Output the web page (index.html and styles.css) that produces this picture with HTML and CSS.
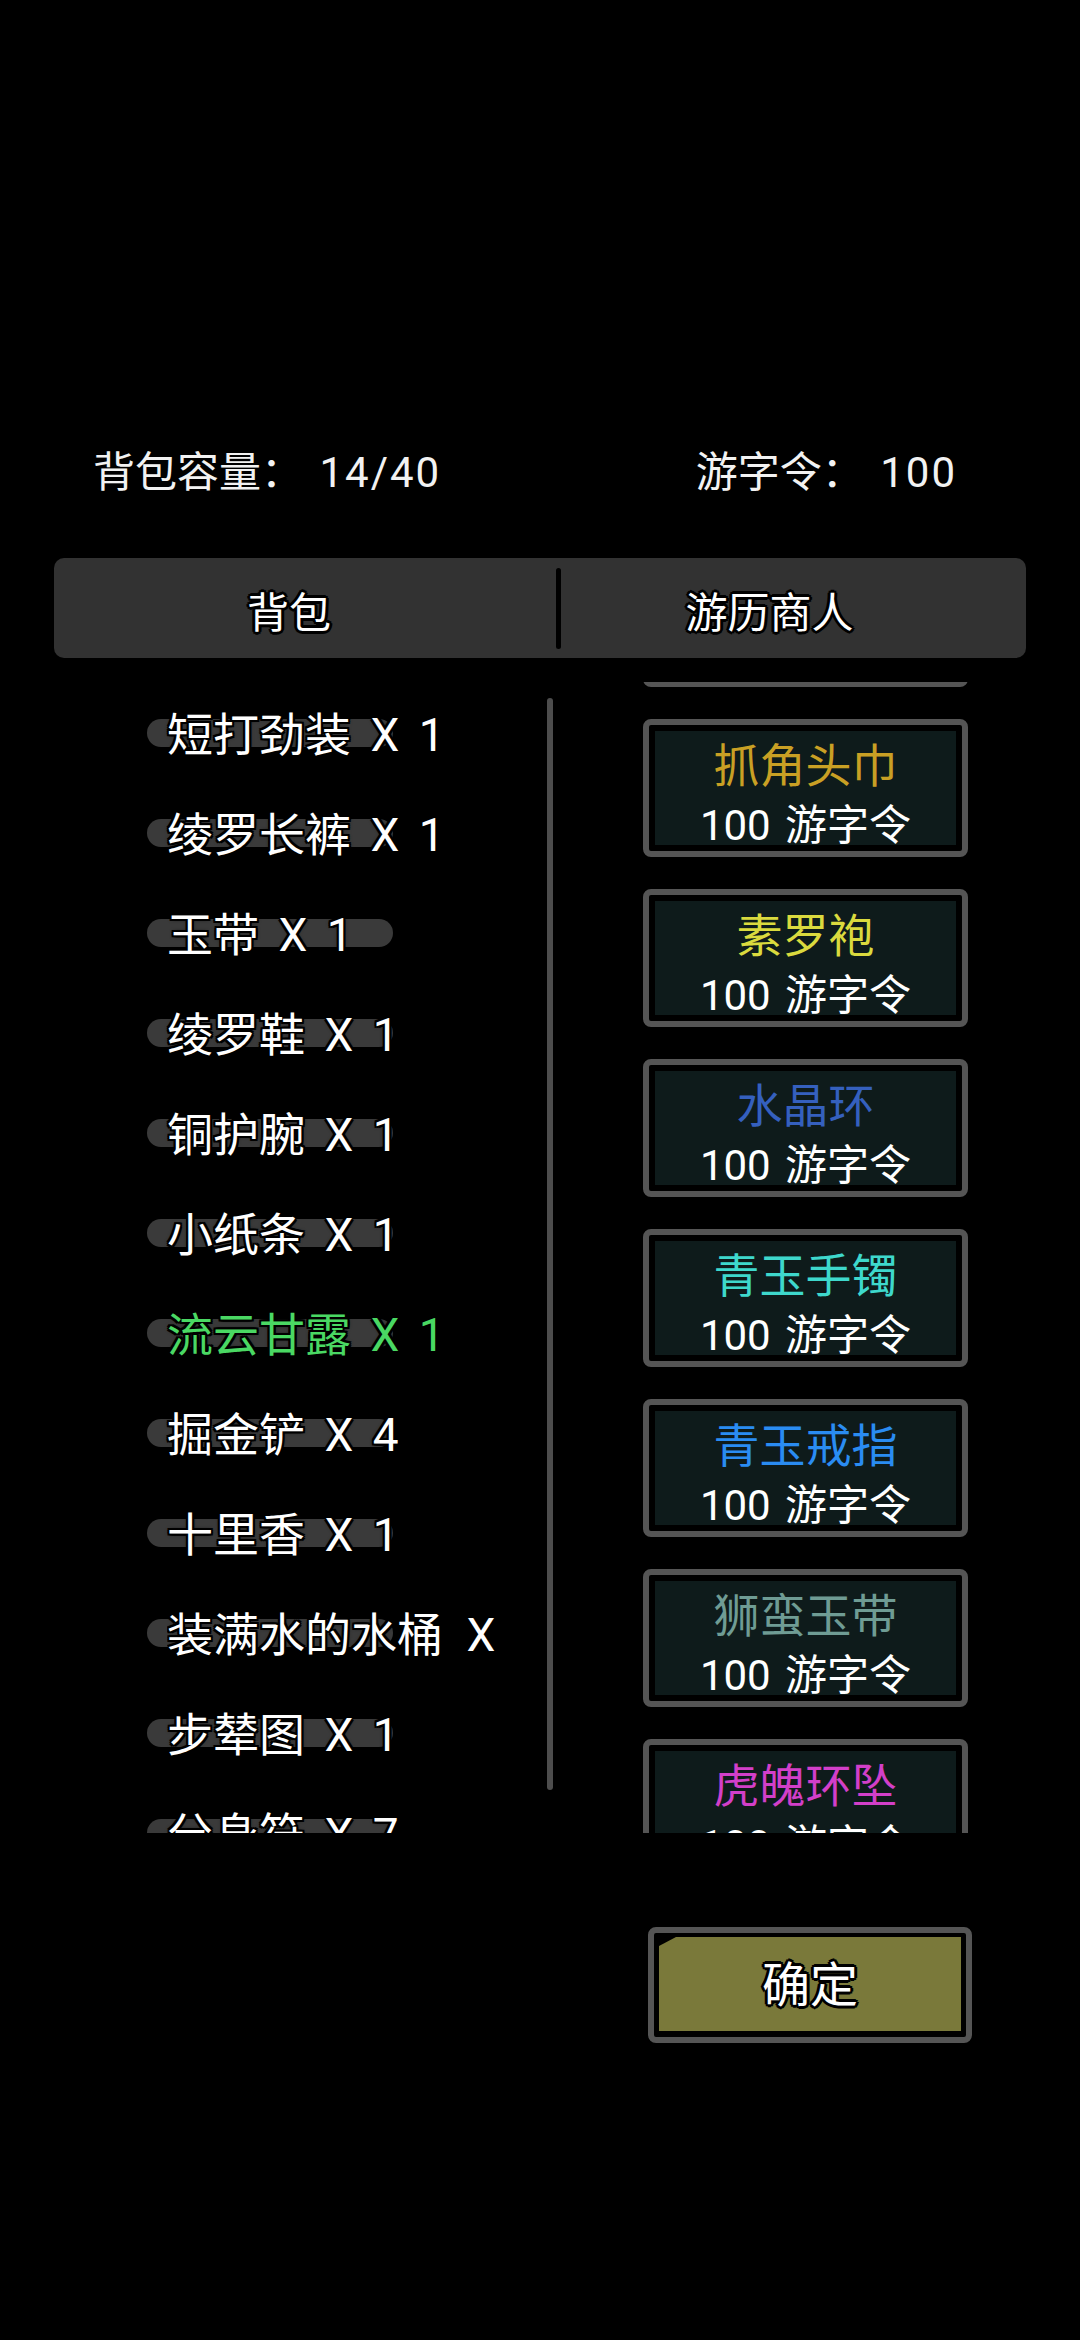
FILE: index.html
```html
<!DOCTYPE html>
<html lang="zh-CN">
<head>
<meta charset="utf-8">
<title>背包</title>
<link rel="stylesheet" href="styles.css">
</head>
<body>
<div class="screen">
  <div class="stats">
    <span class="stat">背包容量： <span class="stat-num">14/40</span></span>
    <span class="stat">游字令： <span class="stat-num">100</span></span>
  </div>

  <div class="tabs">
    <div class="tab tab-bag">背包</div>
    <div class="tab-divider"></div>
    <div class="tab tab-shop">游历商人</div>
  </div>

  <div class="panels">
    <div class="bag">
      <div class="bag-list">
        <div class="bag-item"><span class="item-name">短打劲装 X 1</span></div>
        <div class="bag-item"><span class="item-name">绫罗长裤 X 1</span></div>
        <div class="bag-item"><span class="item-name">玉带 X 1</span></div>
        <div class="bag-item"><span class="item-name">绫罗鞋 X 1</span></div>
        <div class="bag-item"><span class="item-name">铜护腕 X 1</span></div>
        <div class="bag-item"><span class="item-name">小纸条 X 1</span></div>
        <div class="bag-item"><span class="item-name item-green">流云甘露 X 1</span></div>
        <div class="bag-item"><span class="item-name">掘金铲 X 4</span></div>
        <div class="bag-item"><span class="item-name">十里香 X 1</span></div>
        <div class="bag-item"><span class="item-name item-clip">装满水的水桶 X 1</span></div>
        <div class="bag-item"><span class="item-name">步辇图 X 1</span></div>
        <div class="bag-item"><span class="item-name">分身符 X 7</span></div>
      </div>
      <div class="scrollbar"></div>
    </div>

    <div class="shop">
      <div class="shop-list">
        <div class="card"><div class="card-inner"><div class="card-name">&nbsp;</div><div class="card-price">100 游字令</div></div></div>
        <div class="card"><div class="card-inner"><div class="card-name c-gold">抓角头巾</div><div class="card-price">100 游字令</div></div></div>
        <div class="card"><div class="card-inner"><div class="card-name c-yellow">素罗袍</div><div class="card-price">100 游字令</div></div></div>
        <div class="card"><div class="card-inner"><div class="card-name c-navy">水晶环</div><div class="card-price">100 游字令</div></div></div>
        <div class="card"><div class="card-inner"><div class="card-name c-cyan">青玉手镯</div><div class="card-price">100 游字令</div></div></div>
        <div class="card"><div class="card-inner"><div class="card-name c-blue">青玉戒指</div><div class="card-price">100 游字令</div></div></div>
        <div class="card"><div class="card-inner"><div class="card-name c-sage">狮蛮玉带</div><div class="card-price">100 游字令</div></div></div>
        <div class="card"><div class="card-inner"><div class="card-name c-magenta">虎魄环坠</div><div class="card-price">100 游字令</div></div></div>
      </div>
    </div>
  </div>

  <div class="actions">
    <button class="confirm" type="button"><span class="confirm-face"><span class="confirm-label">确定</span></span></button>
  </div>
</div>
</body>
</html>
```

FILE: styles.css
```css
* {
  box-sizing: border-box;
  margin: 0;
  padding: 0;
}

html, body {
  background: #000;
}

body {
  width: 1080px;
  height: 2340px;
  overflow: hidden;
  font-family: Roboto, "Noto Sans CJK SC", "Noto Sans", sans-serif;
  color: #fff;
}

.screen {
  width: 1080px;
  height: 2340px;
}

/* top stats */
.stats {
  display: flex;
  justify-content: space-between;
  padding: 443px 123px 0 93px;
  font-size: 42px;
  line-height: 60px;
  color: #f2f2f2;
}

.stat-num {
  letter-spacing: 2px;
  margin-left: 6px;
}

/* tab bar */
.tabs {
  display: flex;
  align-items: center;
  margin: 55px 54px 0 54px;
  height: 100px;
  background: #323232;
  border-radius: 10px;
}

.tab {
  height: 100px;
  padding-top: 21px;
  line-height: 70px;
  font-size: 42px;
  text-align: center;
  color: #fff;
  text-shadow:
    0 0 3px #000,
    3px 0 0 #000, -3px 0 0 #000, 0 3px 0 #000, 0 -3px 0 #000,
    2px 2px 0 #000, -2px -2px 0 #000, 2px -2px 0 #000, -2px 2px 0 #000;
}

.tab-bag {
  width: 502px;
  padding-right: 32px;
}

.tab-divider {
  width: 5px;
  height: 81px;
  background: #000;
  border-radius: 3px;
}

.tab-shop {
  flex: 1;
  padding-right: 48px;
}

/* panels */
.panels {
  display: flex;
  margin-top: 24px;
  height: 1151px;
  padding-left: 147px;
}

.bag {
  display: flex;
  width: 406px;
  height: 1151px;
}

.bag-list {
  width: 400px;
  height: 1151px;
  overflow: hidden;
  padding-top: 3px;
}

.bag-item {
  position: relative;
  height: 100px;
  display: flex;
  align-items: center;
  padding-left: 20px;
}

.bag-item::before {
  content: "";
  position: absolute;
  left: 0;
  top: 34px;
  width: 246px;
  height: 28px;
  border-radius: 14px;
  background: #3a3a3a;
}

.item-name {
  position: relative;
  display: block;
  white-space: nowrap;
  font-size: 46px;
  line-height: 62px;
  word-spacing: 8px;
  color: #fff;
  text-shadow:
    0 0 4px #000,
    2px 0 0 #000, -2px 0 0 #000, 0 2px 0 #000, 0 -2px 0 #000,
    2px 2px 0 #000, -2px -2px 0 #000, 2px -2px 0 #000, -2px 2px 0 #000;
}

.item-clip {
  white-space: normal;
  width: 356px;
  height: 62px;
  overflow: hidden;
  word-spacing: 12px;
}

.item-green {
  color: #4ad863;
}

.scrollbar {
  width: 6px;
  height: 1092px;
  margin-top: 16px;
  background: #4d4d4d;
  border-radius: 3px;
}

/* shop */
.shop {
  margin-left: 90px;
  width: 325px;
  height: 1151px;
  overflow: hidden;
}

.shop-list {
  margin-top: -133px;
}

.card {
  height: 138px;
  margin-bottom: 32px;
  border: 6px solid #555;
  border-radius: 8px;
  background: #000;
  padding: 6px;
}

.card-inner {
  height: 114px;
  background: #0e1b1b;
  text-align: center;
}

.card-name {
  padding-top: 7px;
  font-size: 46px;
  line-height: 56px;
}

.card-price {
  margin-top: 10px;
  font-size: 42px;
  line-height: 44px;
  word-spacing: 4px;
  color: #fff;
}

.c-gold { color: #c9a024; }
.c-yellow { color: #dada3e; }
.c-navy { color: #3560be; }
.c-cyan { color: #3ed8cc; }
.c-blue { color: #2a8cf2; }
.c-sage { color: #6f9c94; }
.c-magenta { color: #d23fc9; }

/* confirm button */
.actions {
  display: flex;
  justify-content: flex-end;
  padding-right: 108px;
  margin-top: 94px;
}

.confirm {
  display: block;
  width: 324px;
  height: 116px;
  border: 6px solid #555;
  border-radius: 8px;
  background: #000;
  padding: 4px 5px 6px 5px;
  font-family: inherit;
  cursor: pointer;
}

.confirm-face {
  display: flex;
  align-items: center;
  justify-content: center;
  width: 100%;
  height: 100%;
  background: #7a793a;
  clip-path: polygon(17px 0, 100% 0, 100% 100%, 0 100%, 0 9px);
}

.confirm-label {
  padding-top: 4px;
  font-size: 48px;
  line-height: 60px;
  color: #fff;
  text-shadow:
    0 0 3px #000,
    3px 0 0 #000, -3px 0 0 #000, 0 3px 0 #000, 0 -3px 0 #000,
    2px 2px 0 #000, -2px -2px 0 #000, 2px -2px 0 #000, -2px 2px 0 #000;
}
```
